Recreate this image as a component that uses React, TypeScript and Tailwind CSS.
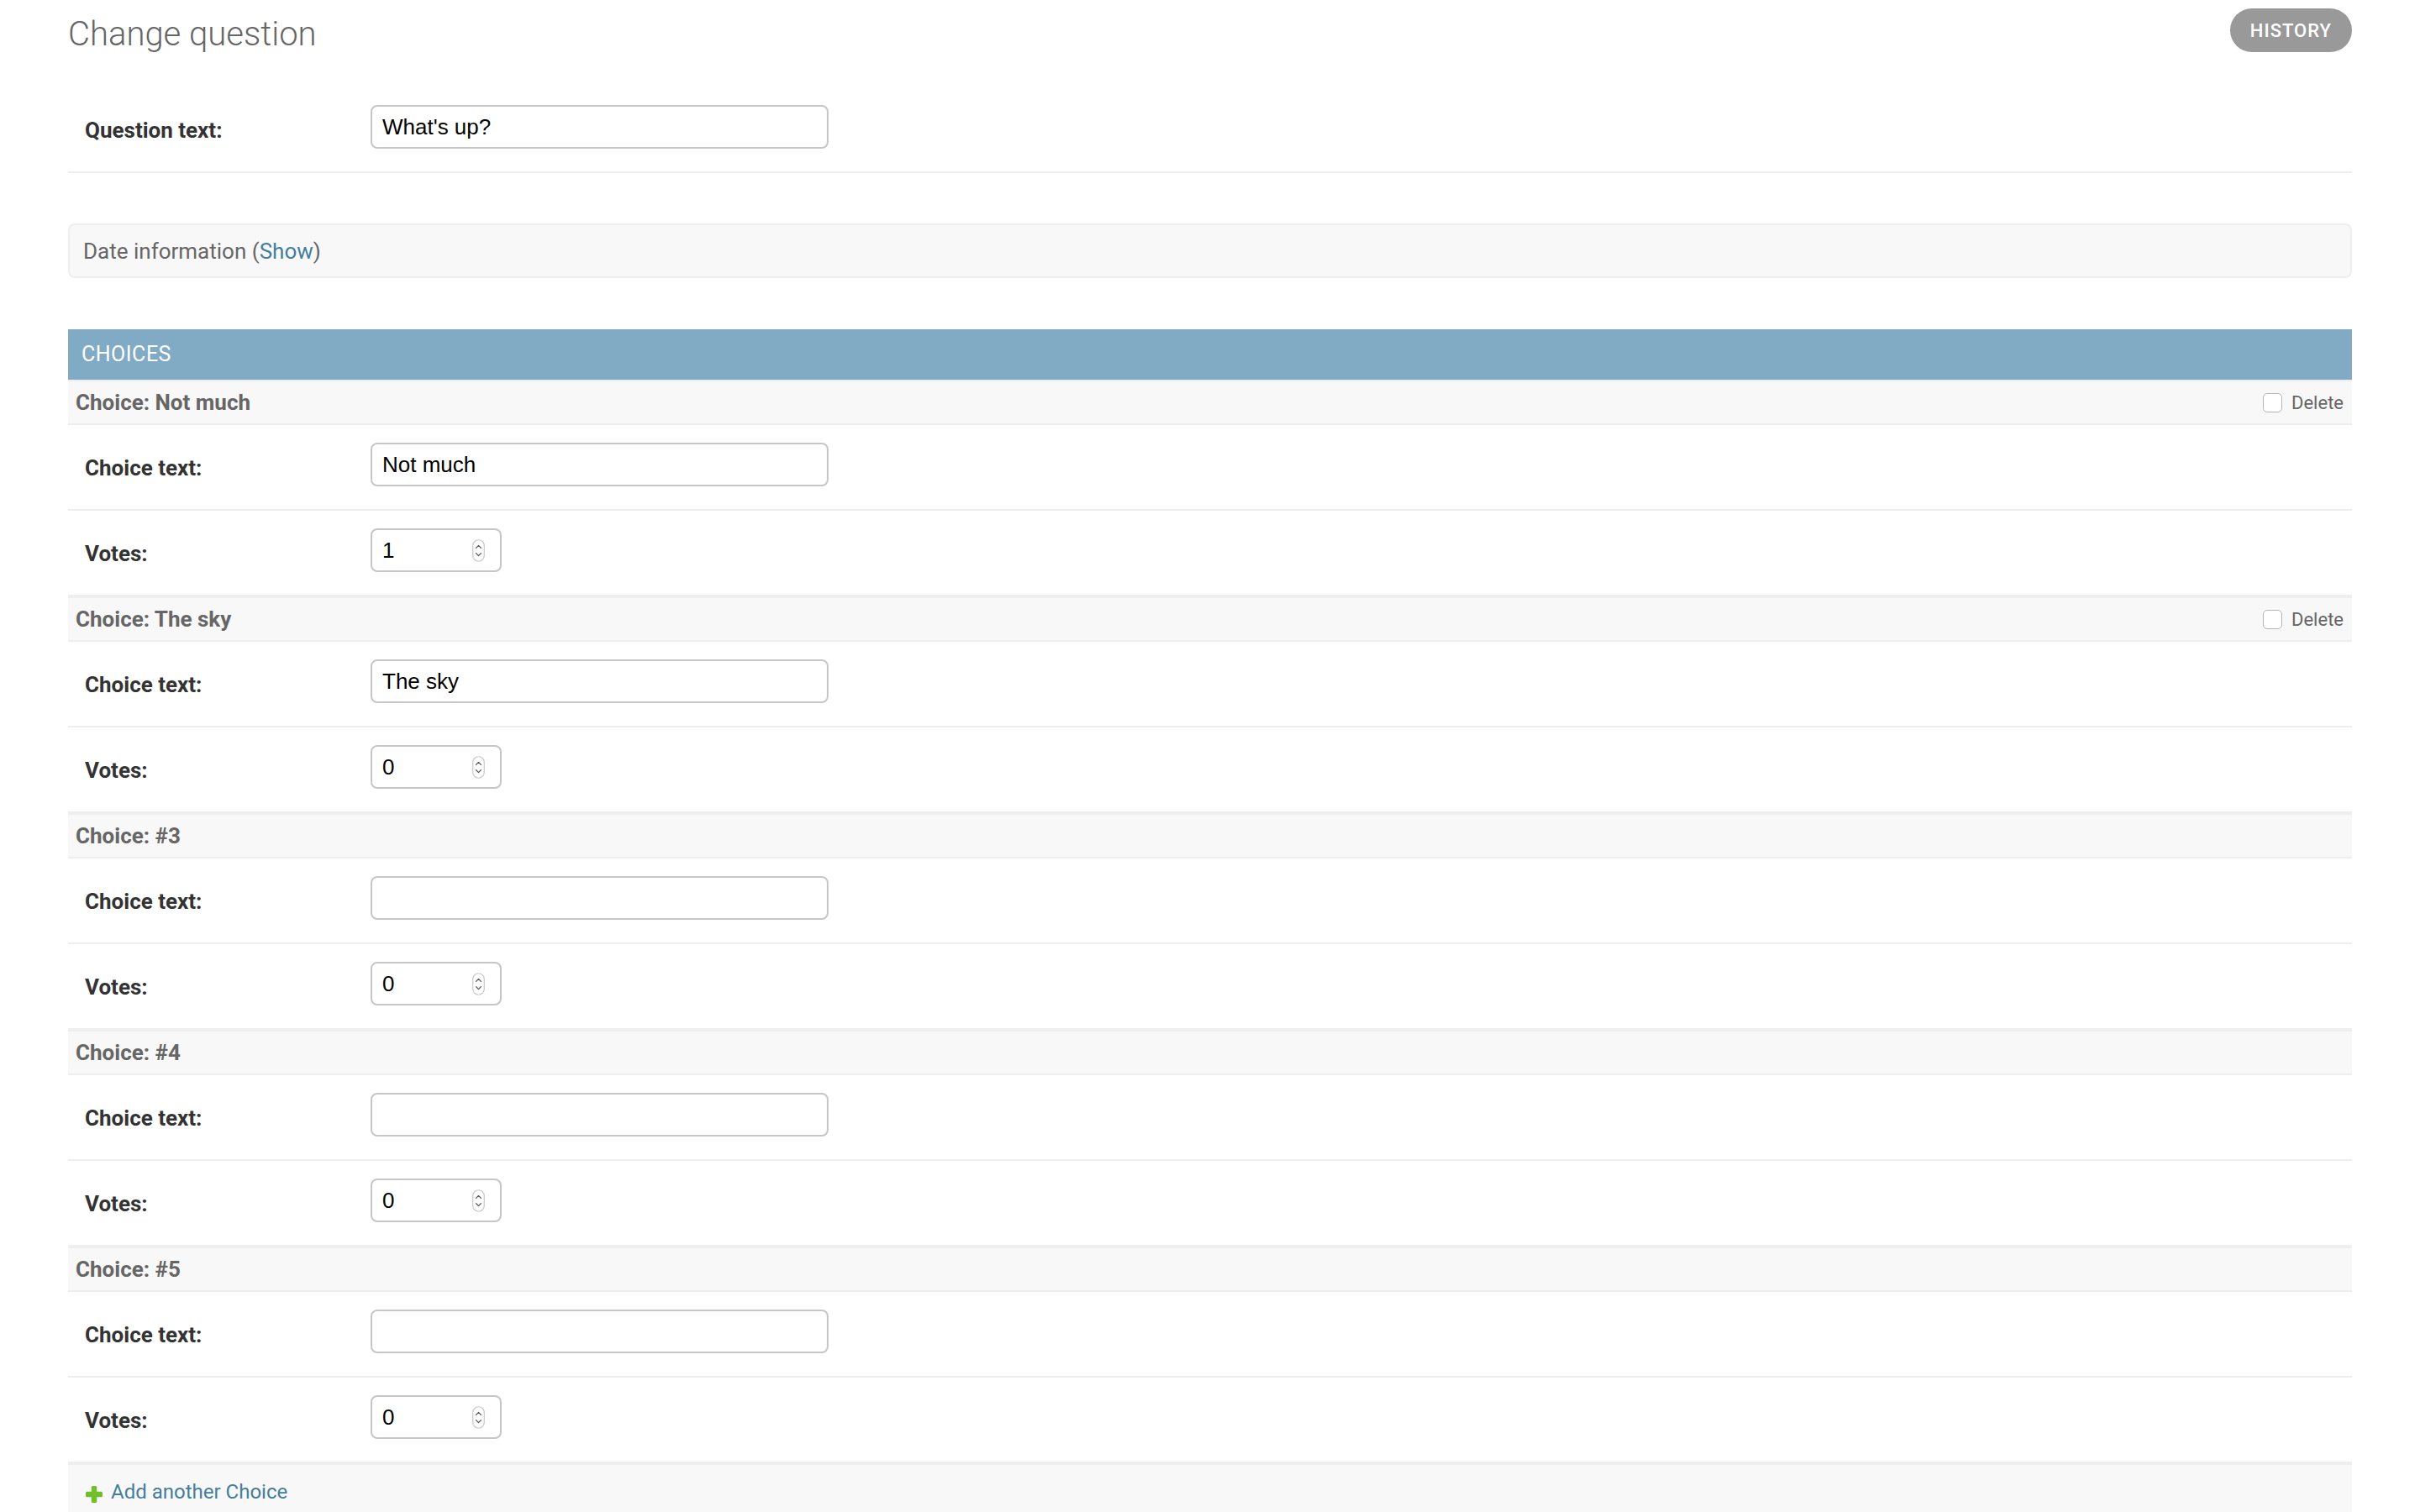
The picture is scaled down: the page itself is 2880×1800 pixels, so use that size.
import { Fragment } from "react";

type Choice = {
  title: string;
  text: string;
  votes: string;
  canDelete: boolean;
};

const choices: Choice[] = [
  { title: "Not much", text: "Not much", votes: "1", canDelete: true },
  { title: "The sky", text: "The sky", votes: "0", canDelete: true },
  { title: "#3", text: "", votes: "0", canDelete: false },
  { title: "#4", text: "", votes: "0", canDelete: false },
  { title: "#5", text: "", votes: "0", canDelete: false },
];

function Spinner() {
  return (
    <svg width="15" height="27" viewBox="0 0 15 27" className="shrink-0">
      <rect x="0.75" y="0.75" width="13.5" height="25.5" rx="6.75" fill="#fff" stroke="#c8c8c8" strokeWidth="1.2" />
      <path d="M4.6 10.4 L7.5 7.4 L10.4 10.4" fill="none" stroke="#555" strokeWidth="1.3" strokeLinecap="round" strokeLinejoin="round" />
      <path d="M4.6 16.6 L7.5 19.6 L10.4 16.6" fill="none" stroke="#555" strokeWidth="1.3" strokeLinecap="round" strokeLinejoin="round" />
    </svg>
  );
}

function FormRow({ label, children }: { label: string; children: React.ReactNode }) {
  return (
    <div className="flex items-start h-[102px] pt-[21px] px-[20px] border-b-2 border-[#eeeeee]">
      <label className="w-[340px] shrink-0 pt-[17px] text-[26px] leading-[26px] font-bold text-[#333]">
        {label}
      </label>
      {children}
    </div>
  );
}

function TextInput({ value }: { value: string }) {
  return (
    <input
      type="text"
      readOnly
      value={value}
      className="w-[545px] h-[52px] border-2 border-[#c6c6c6] rounded-[8px] px-[12px] text-[26px] text-black bg-white outline-none font-['Liberation_Sans',Arial,sans-serif]"
    />
  );
}

function NumberInput({ value }: { value: string }) {
  return (
    <div className="flex items-center w-[156px] h-[52px] border-2 border-[#c6c6c6] rounded-[8px] pl-[12px] pr-[18px] bg-white">
      <input
        type="text"
        readOnly
        value={value}
        className="flex-1 min-w-0 text-[26px] text-black bg-transparent outline-none font-['Liberation_Sans',Arial,sans-serif]"
      />
      <Spinner />
    </div>
  );
}

export default function App() {
  return (
    <div className="min-h-screen bg-white px-[81px] font-['Roboto','Liberation_Sans',sans-serif]">
      <div className="flex items-start justify-between pt-[10px] mb-[41px]">
        <h1 className="mt-[7px] mb-[-2px] text-[40px] leading-[48px] font-light text-[#666]">Change question</h1>
        <a className="flex items-center h-[52px] px-[24px] rounded-full bg-[#999999] text-white text-[22px] font-medium tracking-[1px] uppercase">
          History
        </a>
      </div>

      <fieldset>
        <FormRow label="Question text:">
          <TextInput value="What's up?" />
        </FormRow>
      </fieldset>

      <div className="mt-[60px] h-[65px] flex items-center pt-[2px] px-[16px] border-2 border-[#eeeeee] rounded-[8px] bg-[#f8f8f8] text-[26px] text-[#666]">
        <span>
          Date information (<a className="text-[#447e9b]">Show</a>)
        </span>
      </div>

      <div className="mt-[61px]">
        <h2 className="h-[60px] flex items-center px-[16px] bg-[#81abc5] text-white text-[25px] tracking-[0.5px] uppercase">
          Choices
        </h2>

        {choices.map((c) => (
          <Fragment key={c.title}>
            <div className="h-[54px] flex items-center justify-between pl-[9px] pr-[10px] bg-[#f8f8f8] border-t-2 border-b-2 border-[#eeeeee]">
              <h3 className="text-[26px] font-bold text-[#666]">Choice: {c.title}</h3>
              {c.canDelete && (
                <label className="flex items-center gap-[11px] text-[22px] text-[#666]">
                  <span className="w-[23px] h-[23px] rounded-[5px] border-[1.5px] border-[#b5b5b5] bg-white" />
                  Delete
                </label>
              )}
            </div>
            <FormRow label="Choice text:">
              <TextInput value={c.text} />
            </FormRow>
            <FormRow label="Votes:">
              <NumberInput value={c.votes} />
            </FormRow>
          </Fragment>
        ))}

        <div className="h-[80px] flex items-start gap-[10px] pt-[17px] pl-[21px] bg-[#f8f8f8] border-t-2 border-[#eeeeee]">
          <svg width="20" height="20" viewBox="0 0 20 20" className="mt-[8px] shrink-0">
            <rect x="6.75" y="0" width="6.5" height="20" rx="1.6" fill="#70bf2b" />
            <rect x="0" y="6.75" width="20" height="6.5" rx="1.6" fill="#70bf2b" />
          </svg>
          <a className="text-[24px] leading-[30px] text-[#447e9b]">Add another Choice</a>
        </div>
      </div>
    </div>
  );
}
